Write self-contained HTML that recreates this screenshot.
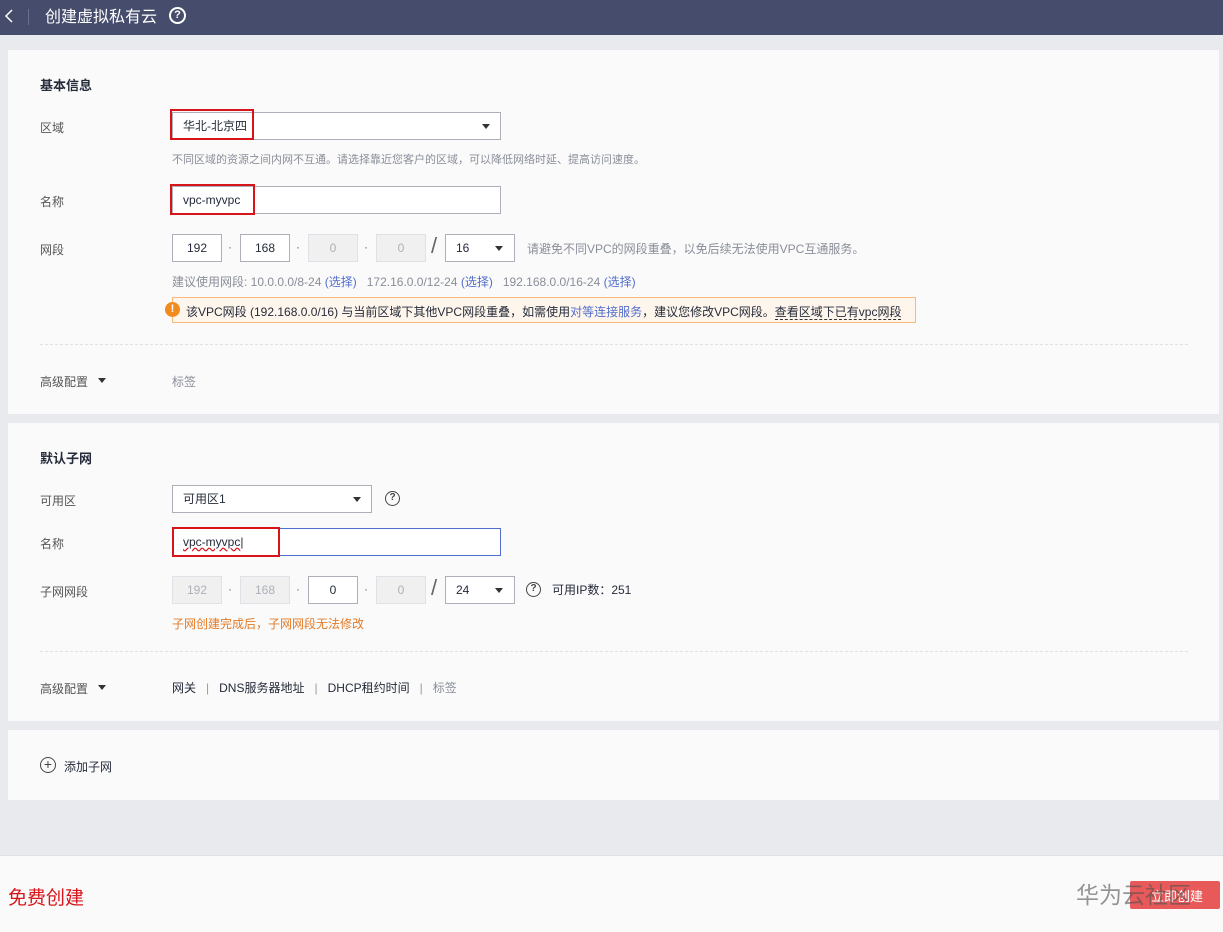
<!DOCTYPE html>
<html><head><meta charset="utf-8"><style>
*{margin:0;padding:0;box-sizing:border-box}
body{width:1223px;height:932px;background:#e9eaee;font-family:"Liberation Sans","Noto Sans CJK SC",sans-serif;font-size:12px;color:#252b3a;position:relative;overflow:hidden}
.a{position:absolute;white-space:nowrap}
.card{position:absolute;left:8px;width:1211px;background:#fafafa}
.lbl{color:#555}
.inp{position:absolute;border:1px solid #adb0b8;background:#fff;height:28px;line-height:26px;padding-left:10px;font-size:12px}
.dis{background:#f0f0f0;border-color:#dfe1e6;color:#adb0b8;text-align:center;padding:0}
.ctr{text-align:center;padding:0}
.red{position:absolute;border:2px solid #d8141b}
.tri{position:absolute;width:0;height:0;border-left:4px solid transparent;border-right:4px solid transparent;border-top:5px solid #333}
.dot{position:absolute;color:#666}
.slash{position:absolute;font-size:22px;color:#666;font-weight:300}
.q{position:absolute;width:15px;height:15px;border:1.5px solid #444;border-radius:50%;font-size:10px;line-height:12px;text-align:center;color:#444;font-weight:bold}
.dash{position:absolute;left:40px;width:1148px;border-top:1px dashed #dfe1e6}
.link{color:#526ecc}
</style></head><body>
<div class="a" style="left:0;top:0;width:1223px;height:35px;background:#464c6c"></div>
<svg class="a" style="left:3px;top:8px" width="12" height="16"><path d="M9 2 L3 8 L9 14" stroke="#fff" stroke-width="1.5" fill="none"/></svg>
<div class="a" style="left:28px;top:9px;width:1px;height:16px;background:#6b7090"></div>
<div class="a" style="left:45px;top:3px;color:#fff;font-size:16px">创建虚拟私有云</div>
<div class="a" style="left:169px;top:7px;width:17px;height:17px;border:2px solid #fff;border-radius:50%;color:#fff;font-size:11px;line-height:13px;text-align:center;font-weight:bold">?</div>

<div class="card" style="top:50px;height:364px"></div>
<div class="a" style="left:40px;top:75px;font-size:13px;font-weight:bold">基本信息</div>
<div class="a lbl" style="left:40px;top:119px">区域</div>
<div class="inp" style="left:172px;top:112px;width:329px;">华北-北京四</div>
<div class="tri" style="left:482px;top:124px"></div>
<div class="red" style="left:170px;top:109px;width:84px;height:31px"></div>
<div class="a" style="left:172px;top:151px;color:#8a8e99;font-size:11px">不同区域的资源之间内网不互通。请选择靠近您客户的区域，可以降低网络时延、提高访问速度。</div>
<div class="a lbl" style="left:40px;top:193px">名称</div>
<div class="inp" style="left:172px;top:186px;width:329px">vpc-myvpc</div>
<div class="red" style="left:170px;top:184px;width:85px;height:31px"></div>
<div class="a lbl" style="left:40px;top:241px">网段</div>
<div class="inp ctr" style="left:172px;top:234px;width:50px">192</div>
<div class="dot" style="left:228px;top:240px">·</div>
<div class="inp ctr" style="left:240px;top:234px;width:50px">168</div>
<div class="dot" style="left:296px;top:240px">·</div>
<div class="inp dis" style="left:308px;top:234px;width:50px">0</div>
<div class="dot" style="left:364px;top:240px">·</div>
<div class="inp dis" style="left:376px;top:234px;width:50px">0</div>
<div class="slash" style="left:431px;top:233px">/</div>
<div class="inp" style="left:445px;top:234px;width:70px">16</div>
<div class="tri" style="left:495px;top:246px"></div>
<div class="a" style="left:527px;top:240px;color:#8a8e99">请避免不同VPC的网段重叠，以免后续无法使用VPC互通服务。</div>
<div class="a" style="left:172px;top:273px;color:#8a8e99">建议使用网段: 10.0.0.0/8-24 <span class="link">(选择)</span>&nbsp;&nbsp; 172.16.0.0/12-24 <span class="link">(选择)</span>&nbsp;&nbsp; 192.168.0.0/16-24 <span class="link">(选择)</span></div>
<div class="a" style="left:172px;top:297px;width:744px;height:26px;background:#fef6ec;border:1px solid #f5b97b"></div>
<div class="a" style="left:165px;top:302px;width:15px;height:15px;border-radius:50%;background:#f28b1f;color:#fff;font-size:11px;line-height:15px;text-align:center;font-weight:bold">!</div>
<div class="a" style="left:186px;top:303px;color:#252b3a">该VPC网段 (192.168.0.0/16) 与当前区域下其他VPC网段重叠，如需使用<span class="link">对等连接服务</span>，建议您修改VPC网段。<span style="border-bottom:1px dashed #333">查看区域下已有vpc网段</span></div>
<div class="dash" style="top:344px"></div>
<div class="a lbl" style="left:40px;top:373px">高级配置</div>
<div class="tri" style="left:98px;top:378px"></div>
<div class="a" style="left:172px;top:373px;color:#8a8e99">标签</div>

<div class="card" style="top:423px;height:298px"></div>
<div class="a" style="left:40px;top:448px;font-size:13px;font-weight:bold">默认子网</div>
<div class="a lbl" style="left:40px;top:492px">可用区</div>
<div class="inp" style="left:172px;top:485px;width:200px">可用区1</div>
<div class="tri" style="left:353px;top:497px"></div>
<div class="q" style="left:385px;top:491px">?</div>
<div class="a lbl" style="left:40px;top:535px">名称</div>
<div class="inp" style="left:172px;top:528px;width:329px;border-color:#526ecc"><span style="text-decoration:underline wavy #d8141b">vpc-myvpc</span>|</div>
<div class="red" style="left:172px;top:527px;width:108px;height:30px"></div>
<div class="a lbl" style="left:40px;top:583px">子网网段</div>
<div class="inp dis" style="left:172px;top:576px;width:50px">192</div>
<div class="dot" style="left:228px;top:582px">·</div>
<div class="inp dis" style="left:240px;top:576px;width:50px">168</div>
<div class="dot" style="left:296px;top:582px">·</div>
<div class="inp ctr" style="left:308px;top:576px;width:50px">0</div>
<div class="dot" style="left:364px;top:582px">·</div>
<div class="inp dis" style="left:376px;top:576px;width:50px">0</div>
<div class="slash" style="left:431px;top:575px">/</div>
<div class="inp" style="left:445px;top:576px;width:70px">24</div>
<div class="tri" style="left:495px;top:588px"></div>
<div class="q" style="left:526px;top:582px">?</div>
<div class="a" style="left:552px;top:581px">可用IP数：251</div>
<div class="a" style="left:172px;top:615px;color:#e37a26">子网创建完成后，子网网段无法修改</div>
<div class="dash" style="top:651px"></div>
<div class="a lbl" style="left:40px;top:680px">高级配置</div>
<div class="tri" style="left:98px;top:685px"></div>
<div class="a" style="left:172px;top:679px">网关 &nbsp;&nbsp;<span style="color:#999">|</span>&nbsp;&nbsp; DNS服务器地址 &nbsp;&nbsp;<span style="color:#999">|</span>&nbsp;&nbsp; DHCP租约时间 &nbsp;&nbsp;<span style="color:#999">|</span>&nbsp;&nbsp; <span style="color:#8a8e99">标签</span></div>

<div class="card" style="top:730px;height:70px"></div>
<div class="a" style="left:40px;top:757px;width:16px;height:16px;border:1.5px solid #444;border-radius:50%;text-align:center;line-height:12px;font-size:14px;color:#444">+</div>
<div class="a" style="left:64px;top:758px">添加子网</div>

<div class="a" style="left:0;top:855px;width:1223px;height:77px;background:#fafafa;border-top:1px solid #dfe1e6"></div>
<div class="a" style="left:8px;top:883px;color:#d8141b;font-size:19px">免费创建</div>
<div class="a" style="left:1130px;top:881px;width:90px;height:28px;background:#e85a5a;border-radius:2px"></div>
<div class="a" style="left:1151px;top:886px;color:#fff;font-size:13px">立即创建</div>
<div class="a" style="left:1076px;top:876px;color:rgba(80,80,80,0.6);font-size:23px">华为云社区</div>
</body></html>
